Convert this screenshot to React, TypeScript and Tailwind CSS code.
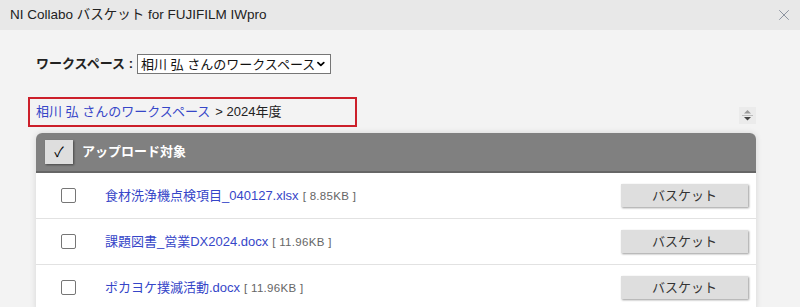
import { ChevronDown, X } from 'lucide-react'

interface FileRow {
  name: string
  size: string
}

const files: FileRow[] = [
  { name: '食材洗浄機点検項目_040127.xlsx', size: '8.85KB' },
  { name: '課題図書_営業DX2024.docx', size: '11.96KB' },
  { name: 'ポカヨケ撲滅活動.docx', size: '11.96KB' },
]

export default function App() {
  return (
    <div className="w-[800px] h-[307px] overflow-hidden bg-[#f3f3f3] font-['Liberation_Sans','Noto_Sans_CJK_JP',sans-serif] text-[#222]">
      {/* Title bar */}
      <div className="h-[30px] bg-[#e8e8e8] flex items-center justify-between pl-[10px] pr-[7px]">
        <span className="text-[13.5px] text-[#222] leading-none whitespace-nowrap">NI Collabo バスケット for FUJIFILM IWpro</span>
        <X className="w-[18px] h-[18px] text-[#7a8290]" strokeWidth={1.1} />
      </div>

      <div className="pl-[36px] pr-[44px]">
        {/* Workspace select */}
        <div className="flex items-center mt-[24px] h-[20px]">
          <span className="text-[13px] font-bold text-[#222] w-[101px] whitespace-nowrap">ワークスペース :</span>
          <div className="w-[194px] h-[20px] border border-[#767676] bg-white flex items-center pl-[3px] pr-[3px] justify-between">
            <span className="text-[13px] text-[#111] leading-none whitespace-nowrap">相川 弘 さんのワークスペース</span>
            <ChevronDown className="w-[12px] h-[12px] text-black" strokeWidth={3.5} />
          </div>
        </div>

        {/* Breadcrumb + sort */}
        <div className="flex items-start justify-between mt-[23px] -ml-[8px]">
          <div className="w-[329px] h-[30px] border-2 border-[#cc1f2a] flex items-center pl-[6px] text-[13px] whitespace-nowrap">
            <span className="text-[#3646c8]">相川 弘 さんのワークスペース</span>
            <span className="text-[#222] ml-[5px]">&gt; 2024年度</span>
          </div>
          <div className="mt-[10px] w-[17px] h-[17px] bg-[#ebebeb] flex flex-col items-center justify-center">
            <svg width="13" height="13" viewBox="0 0 13 13">
              <path d="M6.5 1 L10 4.5 L3 4.5 Z" fill="#9a9a9a" />
              <rect x="1" y="6" width="11" height="1" fill="#bdbdbd" />
              <path d="M3 8 L10 8 L6.5 11.5 Z" fill="#444" />
            </svg>
          </div>
        </div>

        {/* Table */}
        <div className="mt-[6px] rounded-t-[6px] overflow-hidden shadow-[0_0_6px_rgba(0,0,0,0.12)] bg-white">
          <div className="h-[40px] bg-[#808080] border-b-2 border-[#666] flex items-center pl-[9px]">
            <div className="w-[28px] h-[24px] bg-[#dedede] shadow-[1px_1px_2px_rgba(0,0,0,0.45)] flex items-center justify-center text-[14px] text-black">
              ✓
            </div>
            <span className="ml-[9px] text-[13px] font-bold text-white whitespace-nowrap">アップロード対象</span>
          </div>
          {files.map((f, i) => (
            <div
              key={i}
              className="h-[46px] flex items-center border-b border-[#e2e2e2] pr-[8px]"
            >
              <div className="ml-[25px] w-[15px] h-[15px] border border-[#767676] rounded-[2px] bg-white" />
              <div className="ml-[29px] flex-1 flex items-baseline whitespace-nowrap">
                <span className="text-[13px] text-[#3646c8]">{f.name}</span>
                <span className="ml-[4px] text-[11.5px] text-[#666] tracking-[0.3px]">[ {f.size} ]</span>
              </div>
              <button className="w-[127px] h-[23px] bg-[#dedede] shadow-[1px_1px_2px_rgba(0,0,0,0.4)] text-[13px] text-[#333]">
                バスケット
              </button>
            </div>
          ))}
        </div>
      </div>
    </div>
  )
}
